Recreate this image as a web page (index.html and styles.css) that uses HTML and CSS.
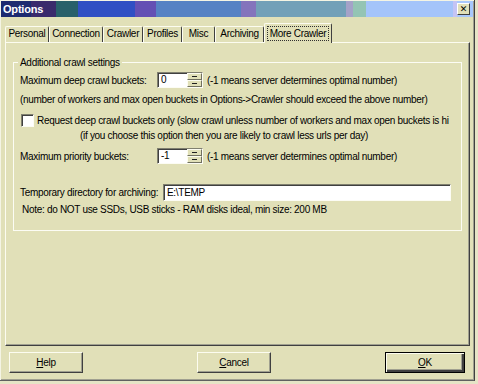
FILE: index.html
```html
<!DOCTYPE html>
<html>
<head>
	<meta charset="utf-8">
	<title>Options</title>
	<link rel="stylesheet" href="styles.css">
</head>
<body>
	<div class="window">
		<div class="titlebar">
			<span class="title">Options</span>
			<button type="button" class="close">&#x2715;</button>
		</div>
		<ul class="tabs">
			<li>Personal</li>
			<li>Connection</li>
			<li>Crawler</li>
			<li>Profiles</li>
			<li>Misc</li>
			<li>Archiving</li>
			<li class="active"><span>More Crawler</span></li>
		</ul>
		<div class="panel">
			<fieldset class="group">
				<legend>Additional crawl settings</legend>
				<div class="row row-deep">
					<label class="label">Maximum deep crawl buckets:</label>
					<div class="spin">
						<span class="spin-value">0</span>
						<span class="spin-btns"><i class="up"></i><i class="down"></i></span>
					</div>
					<span class="hint">(-1 means server determines optimal number)</span>
				</div>
				<div class="row row-note">(number of workers and max open buckets in Options-&gt;Crawler should exceed the above number)</div>
				<div class="row row-check">
					<span class="check"></span>
					<span class="check-text">Request deep crawl buckets only (slow crawl unless number of workers and max open buckets is hi</span>
				</div>
				<div class="row row-indent">(if you choose this option then you are likely to crawl less urls per day)</div>
				<div class="row row-prio">
					<label class="label">Maximum priority buckets:</label>
					<div class="spin">
						<span class="spin-value">-1</span>
						<span class="spin-btns"><i class="up"></i><i class="down"></i></span>
					</div>
					<span class="hint">(-1 means server determines optimal number)</span>
				</div>
				<div class="row row-dir">
					<label class="label label-dir">Temporary directory for archiving:</label>
					<span class="textbox">E:\TEMP</span>
				</div>
				<div class="row row-warn">Note: do NOT use SSDs, USB sticks - RAM disks ideal, min size: 200 MB</div>
			</fieldset>
		</div>
		<div class="buttons">
			<button type="button" class="btn"><u>H</u>elp</button>
			<button type="button" class="btn"><u>C</u>ancel</button>
			<button type="button" class="btn default"><u>O</u>K</button>
		</div>
	</div>
</body>
</html>
```

FILE: styles.css
```css
* {
	margin: 0;
	padding: 0;
	box-sizing: border-box;
}

html,
body {
	width: 478px;
	height: 384px;
	overflow: hidden;
}

body {
	background: #e6e4c6;
	font-family: "Liberation Sans", Arial, sans-serif;
	font-size: 10px;
	letter-spacing: -0.3px;
	color: #000;
}

.window {
	width: 475px;
	height: 381px;
	background: #e1e0b8;
	border-right: 1px solid #404040;
	border-bottom: 1px solid #606060;
	box-shadow: inset 1px 1px 0 #f4f4e4, inset -1px -1px 0 #a0a090;
	padding: 1px 1px 0 1px;
}

.titlebar {
	height: 16px;
	display: flex;
	align-items: center;
	justify-content: space-between;
	padding: 0 3px 0 2px;
	background: linear-gradient(to right,
		#1c2a70 0, #1c2a70 30px,
		#3a2a6c 30px, #3a2a6c 55px,
		#28606a 55px, #28606a 77px,
		#3050c4 77px, #3050c4 134px,
		#6450b4 134px, #6450b4 155px,
		#5682c4 155px, #5682c4 240px,
		#8474bc 240px, #8474bc 255px,
		#72a0b8 255px, #72a0b8 345px,
		#a4a2c8 345px, #a4a2c8 352px,
		#94c4b4 352px, #94c4b4 365px,
		#a4c4fa 365px, #a4c4fa 452px,
		#c4c4f4 452px, #c4c4f4 456px,
		#a8c8fc 456px);
}

.title {
	color: #fff;
	font-weight: bold;
	font-size: 11px;
	letter-spacing: -0.2px;
}

.close {
	width: 13px;
	height: 12px;
	font-size: 9px;
	font-weight: bold;
	line-height: 10px;
	letter-spacing: 0;
	background: #e1e0b8;
	border: 1px solid;
	border-color: #fff #404040 #404040 #fff;
	color: #000;
	font-family: "DejaVu Sans", sans-serif;
}

.tabs {
	list-style: none;
	display: flex;
	align-items: flex-end;
	height: 25px;
	padding-left: 4px;
}

.tabs li {
	height: 16px;
	line-height: 14px;
	text-align: center;
	border: 1px solid;
	border-color: #fcfcf0 #404040 transparent #fcfcf0;
	border-bottom: 0;
	border-radius: 2px 2px 0 0;
	white-space: nowrap;
}

.tabs li:nth-child(1) { width: 44px; }
.tabs li:nth-child(2) { width: 54px; }
.tabs li:nth-child(3) { width: 40px; }
.tabs li:nth-child(4) { width: 39px; }
.tabs li:nth-child(5) { width: 33px; }
.tabs li:nth-child(6) { width: 49px; }

.tabs li.active {
	width: 68px;
	padding: 2px 2px 0 2px;
	position: relative;
	z-index: 1;
	background: #e1e0b8;
	margin-bottom: -1px;
	height: 20px;
}

.tabs li.active span {
	display: block;
	border: 1px dotted #303030;
	line-height: 13px;
}

.panel {
	margin: 0 3px 0 4px;
	height: 304px;
	border: 1px solid;
	border-color: #fcfcf0 #404040 #404040 #fcfcf0;
	box-shadow: inset -1px -1px 0 #a0a090;
	padding: 14px 7px 0 7px;
}

.group {
	height: 174px;
	border: 1px solid #fcfcf4;
	padding: 4px 6px 0 6px;
	margin: 0;
	min-width: 0;
}

.group legend {
	padding: 0 2px;
	margin-left: -2px;
}

.row {
	display: flex;
	align-items: center;
	white-space: nowrap;
}

.label {
	width: 137px;
}

.label-dir {
	width: 143px;
}

.spin {
	width: 46px;
	height: 16px;
	display: flex;
	background: #fff;
	border: 1px solid;
	border-color: #808070 #fcfcf4 #fcfcf4 #808070;
	box-shadow: inset 1px 1px 0 #404040;
	margin-right: 4px;
}

.spin-value {
	flex: 1;
	padding: 1px 0 0 3px;
	line-height: 12px;
}

.spin-btns {
	width: 15px;
	display: flex;
	flex-direction: column;
	background: #e1e0b8;
}

.spin-btns i {
	flex: 1;
	border: 1px solid;
	border-color: #fcfcf0 #707060 #707060 #fcfcf0;
	position: relative;
}

.spin-btns i::after {
	content: "";
	position: absolute;
	left: 4px;
	top: 2px;
	width: 5px;
	height: 1px;
	background: #202020;
}

.row-deep {
	height: 16px;
}

.row-note {
	height: 12px;
	margin-top: 5px;
}

.row-check {
	height: 13px;
	margin-top: 9px;
	padding-left: 1px;
}

.check {
	width: 13px;
	height: 13px;
	background: #fff;
	border: 1px solid;
	border-color: #808070 #fcfcf4 #fcfcf4 #808070;
	box-shadow: inset 1px 1px 0 #404040;
	margin-right: 3px;
	flex: none;
}

.check-text {
	overflow: hidden;
	max-width: 418px;
}

.row-indent {
	height: 12px;
	margin-top: 2px;
	padding-left: 60px;
}

.row-prio {
	height: 16px;
	margin-top: 7px;
}

.row-dir {
	height: 17px;
	margin-top: 20px;
}

.textbox {
	width: 288px;
	height: 17px;
	background: #fff;
	border: 1px solid;
	border-color: #808070 #fcfcf4 #fcfcf4 #808070;
	box-shadow: inset 1px 1px 0 #404040;
	padding: 2px 0 0 3px;
	line-height: 12px;
}

.row-warn {
	height: 12px;
	margin-top: 2px;
	padding-left: 2px;
}

.buttons {
	display: flex;
	justify-content: space-between;
	padding: 6px 8px 0 8px;
}

.btn {
	width: 74px;
	height: 21px;
	background: #e1e0b8;
	border: 1px solid;
	border-color: #fcfcf0 #404040 #404040 #fcfcf0;
	box-shadow: inset -1px -1px 0 #a0a090;
	font-family: inherit;
	font-size: 10px;
	letter-spacing: -0.3px;
	color: #000;
}

.btn.default {
	width: 80px;
	border: 1px solid #000;
	box-shadow: inset 1px 1px 0 #fcfcf0, inset -2px -2px 0 #404040, inset -3px -3px 0 #a0a090;
}
```
